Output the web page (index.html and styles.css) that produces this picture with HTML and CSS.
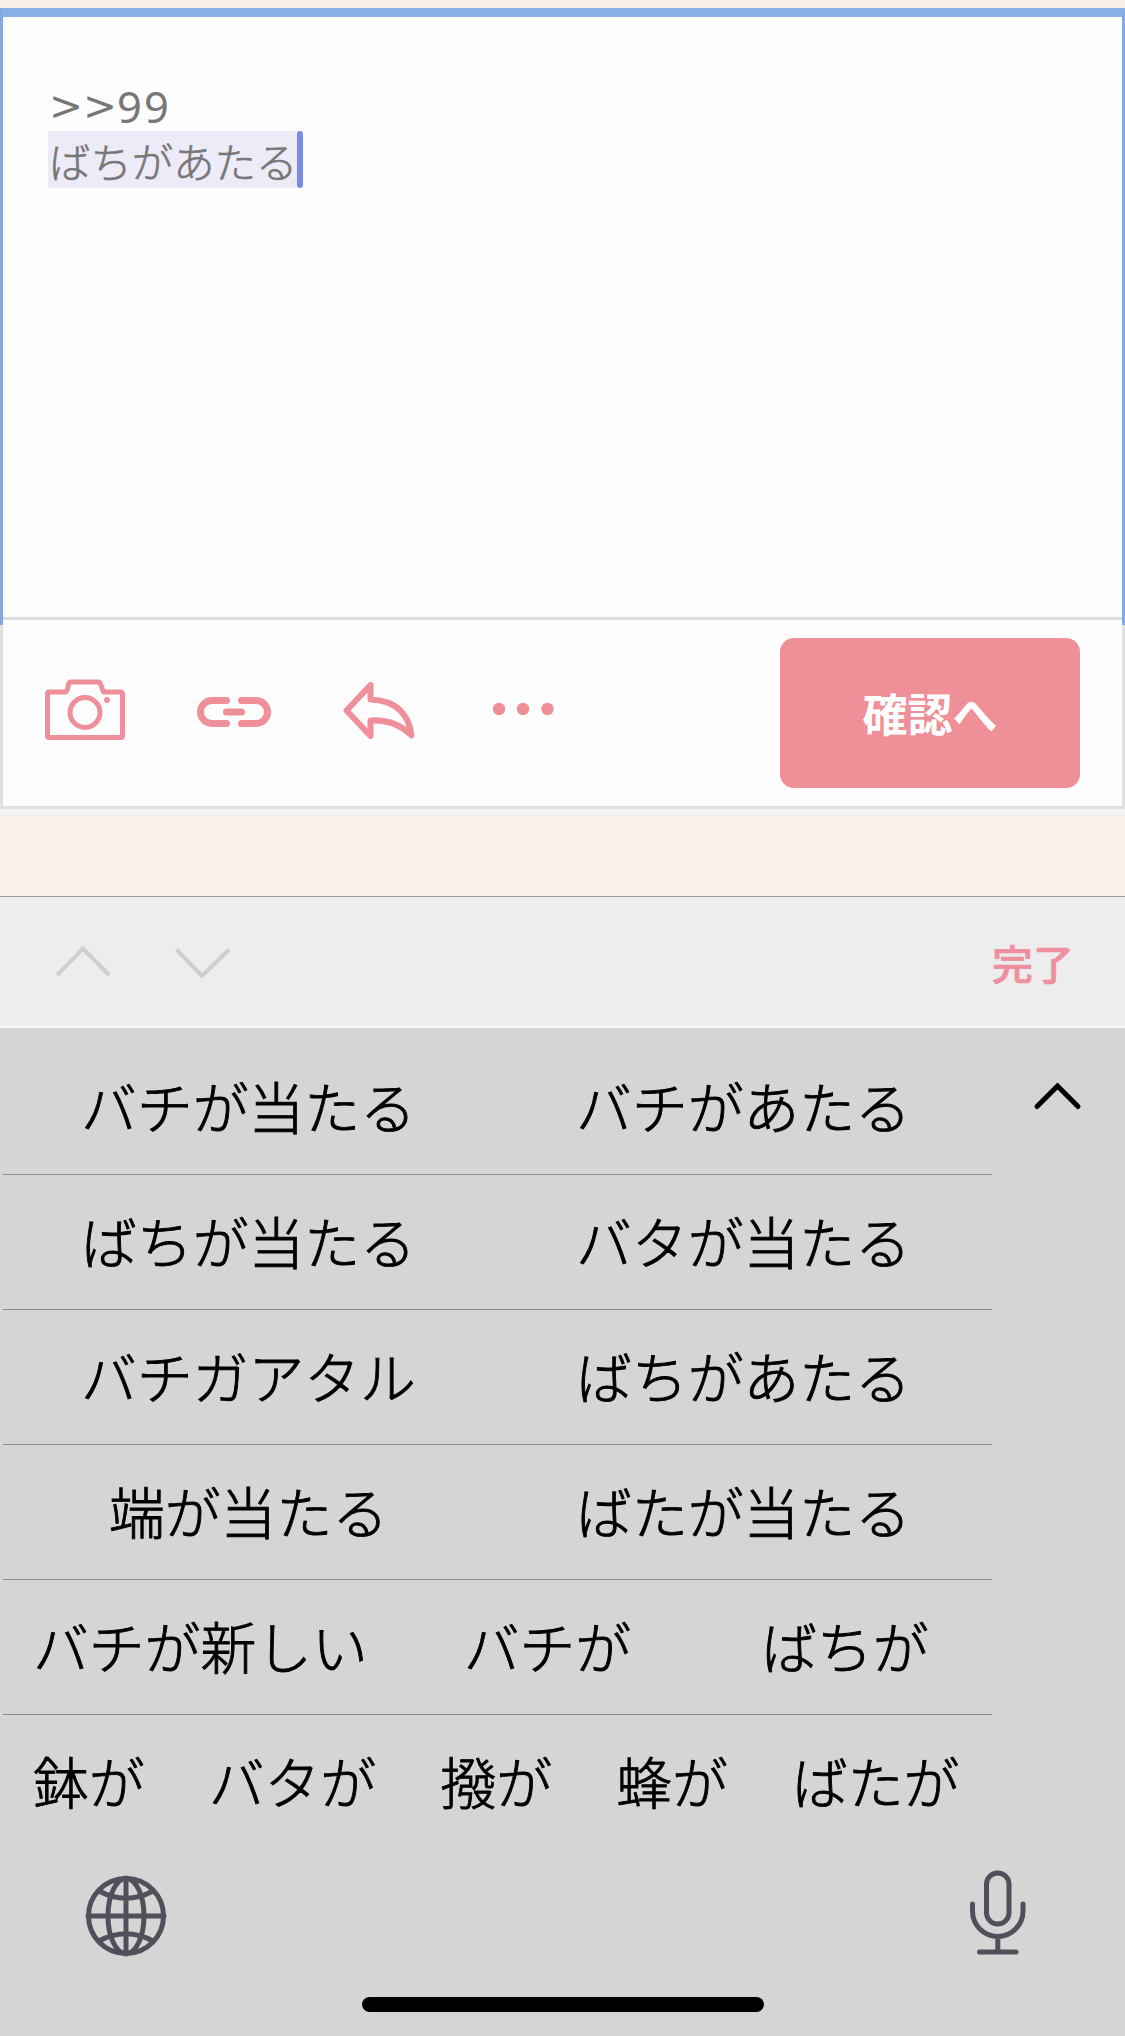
FILE: index.html
```html
<!DOCTYPE html>
<html lang="ja">
<head>
<meta charset="utf-8">
<title>コメント</title>
<link rel="stylesheet" href="styles.css">
</head>
<body>
<main class="screen">
  <section class="composer">
    <div class="editor">
      <div class="line quote"><span class="marks">&gt;&gt;</span><span class="number">99</span></div>
      <div class="line"><span class="marked">ばちがあたる</span><span class="caret"></span></div>
    </div>
    <div class="toolbar">
      <svg class="icon camera" viewBox="44 679 82 62" width="82" height="62">
        <path d="M49 692H65.500Q67.500 691 68.500 684.500Q69 682 71 682H98Q100 682 100.700 684.500L103.500 692H120.500Q122.500 692 122.500 694V735.500Q122.500 737.500 120.500 737.500H49.500Q47.500 737.500 47.500 735.500V694Q47.500 692 49 692Z"/>
        <circle cx="85" cy="712.500" r="15"/><circle class="fill" cx="107" cy="700" r="3"/>
      </svg>
      <svg class="icon link" viewBox="196 696 77 32" width="77" height="32">
        <path d="M226.500 700.500H212A11.500 11.500 0 0 0 212 723.500H226.500M241.500 700.500H256A11.500 11.500 0 0 1 256 723.500H241.500M226.500 712H241.500"/>
      </svg>
      <svg class="icon reply" viewBox="342 680 75 61" width="75" height="61">
        <path d="M370.500 685L346.500 710.500L370.500 736V720.500Q395 719 411.500 735.500Q407 701 370.500 699.500Z"/>
      </svg>
      <svg class="icon dots" viewBox="492 702 62 14" width="62" height="14">
        <circle class="fill" cx="499" cy="709" r="6.200"/><circle class="fill" cx="523" cy="709" r="6.200"/><circle class="fill" cx="547.500" cy="709" r="6.200"/>
      </svg>
      <button class="confirm" type="button">確認へ</button>
    </div>
  </section>
  <div class="page-gap"></div>
  <nav class="accessory">
    <svg class="chevron" viewBox="56 944 55 34" width="55" height="34"><path d="M57 975L83 948.500L109 975"/></svg>
    <svg class="chevron next" viewBox="175 944 56 34" width="56" height="34"><path d="M176.500 949.500L202 976L229 949.500"/></svg>
    <span class="done">完了</span>
  </nav>
  <section class="keyboard">
    <div class="candidates">
      <div class="rows">
        <div class="row pair"><span>バチが当たる</span><span>バチがあたる</span></div>
        <div class="row pair"><span>ばちが当たる</span><span>バタが当たる</span></div>
        <div class="row pair"><span>バチガアタル</span><span>ばちがあたる</span></div>
        <div class="row pair"><span>端が当たる</span><span>ばたが当たる</span></div>
        <div class="row trio"><span>バチが新しい</span><span>バチが</span><span>ばちが</span></div>
        <div class="row many"><span>鉢が</span><span>バタが</span><span>撥が</span><span>蜂が</span><span>ばたが</span></div>
      </div>
      <svg class="collapse" viewBox="1032 1080 50 32" width="50" height="32"><path d="M1037 1106.500L1057.500 1086L1078 1106.500"/></svg>
    </div>
    <div class="keys">
      <svg class="key" viewBox="85 1875 82 82" width="82" height="82">
        <circle cx="126" cy="1916" r="37.500"/>
        <ellipse cx="126" cy="1916" rx="18" ry="37.500"/>
        <path d="M126 1878V1954M88 1916H164M99 1891Q126 1905.500 153 1891M99 1941Q126 1926.500 153 1941"/>
      </svg>
      <svg class="key" viewBox="967 1868 62 88" width="62" height="88">
        <rect x="986.500" y="1873" width="22.500" height="51" rx="11.250"/>
        <path d="M972.500 1904V1911A25.250 25.500 0 0 0 1023 1911V1904M997.800 1937V1951M979.500 1952H1016"/>
      </svg>
    </div>
    <div class="home-bar"></div>
  </section>
</main>
</body>
</html>
```
FILE: styles.css
```css
* { box-sizing: border-box; }
body {
  margin: 0;
  font-family: "Noto Sans CJK JP", sans-serif;
}
.screen {
  width: 1125px;
  height: 2036px;
  padding-top: 8px;
  background: #f8f0e8;
  overflow: hidden;
  display: flex;
  flex-direction: column;
}
svg { display: block; fill: none; flex: none; }

.composer {
  height: 801px;
  background: #e0e0e0;
  display: flex;
  flex-direction: column;
}
.editor {
  height: 617px;
  border: 3px solid #84a9e0;
  border-top: 9px solid #8aaee8;
  border-bottom: 0;
  background: linear-gradient(#ddd, #ddd) 0 600px / 100% 3px no-repeat #fdfdfd;
  padding: 58px 45px 0;
  color: #777;
}
.line {
  height: 57px;
  display: flex;
  font-size: 41.400px;
  line-height: 57px;
}
.quote { height: 56px; line-height: 63px; padding-left: 1px; }
.marks { font-family: "DejaVu Sans", sans-serif; font-size: 40.500px; }
.number { font-family: "Noto Sans", sans-serif; font-size: 43.500px; letter-spacing: 2.300px; }
.marked {
  width: 249px;
  padding-left: 1px;
  background: #edebf7;
  font-weight: 300;
  line-height: 58px;
  white-space: nowrap;
  -webkit-text-stroke: 0.600px #777;
}
.caret { width: 6px; border-radius: 3px; background: #7b8ce8; }

.toolbar {
  height: 181px;
  margin: 0 3px;
  padding: 0 42px 0 41px;
  background: #fdfdfd;
  display: flex;
  align-items: flex-start;
}
.icon { stroke: #ef8f99; stroke-width: 5; stroke-linejoin: round; stroke-linecap: round; }
.icon .fill { fill: #ef8f99; stroke: none; }
.camera { margin-top: 54px; }
.link { margin: 71px 0 0 70px; stroke-width: 7; }
.reply { margin: 55px 0 0 69px; stroke-width: 6; }
.dots { margin: 77px 0 0 75px; }
.confirm {
  width: 300px;
  height: 150px;
  margin: 13px 0 0 auto;
  padding: 0;
  border: 0;
  border-radius: 14px;
  background: #ef8f98;
  color: #fff;
  font: bold 45px/150px "Noto Sans CJK JP", sans-serif;
}

.page-gap {
  height: 88px;
  border-top: 6px solid #f4f4f4;
  border-bottom: 1px solid #999;
  background: #f9f0ea;
}
.accessory {
  height: 131px;
  padding: 0 51px 1px 56px;
  border-bottom: 3px solid #f4f4f4;
  background: #ededed;
  display: flex;
  align-items: center;
}
.chevron { stroke: #cfcfcf; stroke-width: 4; }
.next { margin-left: 64px; }
.done {
  margin-left: auto;
  color: #ef8f9f;
  font-size: 41px;
  font-weight: 500;
  line-height: 60px;
  padding-top: 2px;
  -webkit-text-stroke: 0.700px #ef8f9f;
}

.keyboard {
  flex: 1;
  padding-top: 12px;
  background: #d5d5d5;
  display: flex;
  flex-direction: column;
}
.candidates { display: flex; }
.rows { width: 992px; }
.row {
  height: 135px;
  font-size: 55.800px;
  font-weight: 300;
  line-height: 129px;
  color: #000;
  -webkit-text-stroke: 0.900px #000;
  display: flex;
  white-space: nowrap;
  background: linear-gradient(#8b8b8b, #8b8b8b) 3px 100% / 989px 1px no-repeat;
}
.row:last-child { background: none; }
.pair { display: grid; grid-template-columns: 495px 495px; padding-left: 1px; text-align: center; }
.trio { padding-left: 33px; }
.trio span + span { margin-left: 96px; }
.trio span + span + span { margin-left: 130px; }
.many { padding-left: 33px; gap: 64.200px; }
.collapse { margin: 40px 0 0 40px; stroke: #000; stroke-width: 5; stroke-linecap: round; }
.keys {
  height: 147px;
  padding: 18px 96px 0 85px;
  display: flex;
  justify-content: space-between;
}
.key { stroke: #50505a; stroke-width: 5; stroke-linecap: round; }
.key:first-child { margin-top: 7px; }
.home-bar {
  width: 402px;
  height: 15px;
  margin-left: 362px;
  border-radius: 8px;
  background: #000;
}
```
